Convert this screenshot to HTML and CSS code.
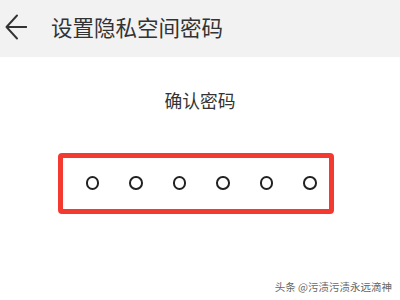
FILE: index.html
```html
<!DOCTYPE html>
<html lang="zh">
<head>
<meta charset="utf-8">
<link rel="stylesheet" href="styles.css">
</head>
<body>
<div class="page">
  <header class="bar">
    <svg class="back" width="22" height="26" viewBox="0 0 22 26">
      <path d="M12 1.5 L1.5 13 L12 24.5 M1.5 13 H21.5" fill="none" stroke="#333" stroke-width="1.9" stroke-linecap="round" stroke-linejoin="round"/>
    </svg>
    <h1 class="title">设置隐私空间密码</h1>
  </header>
  <main class="content">
    <p class="label">确认密码</p>
    <div class="box">
      <span class="dot"></span><span class="dot"></span><span class="dot"></span><span class="dot"></span><span class="dot"></span><span class="dot"></span>
    </div>
  </main>
  <div class="mark">头条 @污渍污渍永远滴神</div>
</div>
</body>
</html>
```
FILE: styles.css
```css
html, body {
  margin: 0;
  padding: 0;
  background: #fff;
}
.page {
  position: relative;
  width: 400px;
  height: 300px;
  overflow: hidden;
  font-family: "Noto Sans CJK SC", "Noto Sans", sans-serif;
  color: #333;
}
.bar {
  height: 57px;
  background: #f2f2f2;
  display: flex;
  align-items: center;
  padding-left: 5px;
  box-sizing: border-box;
  padding-bottom: 4px;
}
.back {
  display: block;
  flex: none;
}
.title {
  margin: 0 0 0 24px;
  font-size: 21.5px;
  font-weight: 400;
  line-height: 28px;
  color: #333;
}
.content {
  display: flex;
  flex-direction: column;
  align-items: flex-start;
}
.label {
  align-self: center;
  margin: 31px 0 0;
  font-size: 17.75px;
  line-height: 24px;
  color: #333;
}
.box {
  margin: 41px 0 0 58px;
  width: 276px;
  height: 61px;
  box-sizing: border-box;
  border: 5px solid #f43a30;
  border-radius: 4px;
  display: flex;
  align-items: center;
  gap: 30.1px;
  padding-left: 22.5px;
  padding-bottom: 1px;
}
.dot {
  width: 13.5px;
  height: 13.5px;
  box-sizing: border-box;
  border: 2px solid #222;
  border-radius: 50%;
  flex: none;
}
.mark {
  position: absolute;
  right: 8px;
  bottom: 7px;
  font-size: 10.5px;
  line-height: 12px;
  color: #666;
  text-shadow: 0 0 2px #fff;
}
```
